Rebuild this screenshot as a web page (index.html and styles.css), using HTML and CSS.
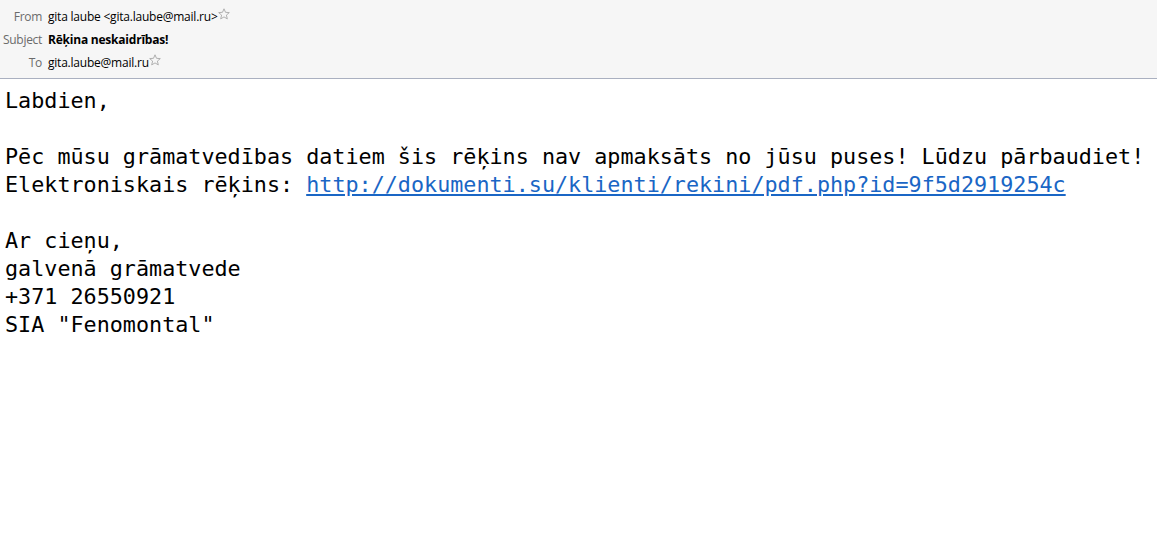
FILE: index.html
```
<!DOCTYPE html>
<html>
<head>
<meta charset="utf-8">
<link rel="stylesheet" href="styles.css">
</head>
<body>
<header class="hdr">
  <div class="row"><span class="lbl">From</span><span class="val">gita laube &lt;gita.laube@mail.ru&gt;</span><svg class="star" viewBox="0 0 12 12"><path d="M6 0.8 L7.5 4.3 L11.3 4.6 L8.4 7.1 L9.3 10.9 L6 8.9 L2.7 10.9 L3.6 7.1 L0.7 4.6 L4.5 4.3 Z"/></svg></div>
  <div class="row"><span class="lbl">Subject</span><span class="val bold">Rēķina neskaidrības!</span></div>
  <div class="row"><span class="lbl">To</span><span class="val">gita.laube@mail.ru</span><svg class="star" viewBox="0 0 12 12"><path d="M6 0.8 L7.5 4.3 L11.3 4.6 L8.4 7.1 L9.3 10.9 L6 8.9 L2.7 10.9 L3.6 7.1 L0.7 4.6 L4.5 4.3 Z"/></svg></div>
</header>
<main class="msg">
<p>Labdien,</p>
<p>&nbsp;</p>
<p>Pēc mūsu grāmatvedības datiem šis rēķins nav apmaksāts no jūsu puses! Lūdzu pārbaudiet!</p>
<p>Elektroniskais rēķins: <a href="#">http://dokumenti.su/klienti/rekini/pdf.php?id=9f5d2919254c</a></p>
<p>&nbsp;</p>
<p>Ar cieņu,</p>
<p>galvenā grāmatvede</p>
<p>+371 26550921</p>
<p>SIA "Fenomontal"</p>
</main>
</body>
</html>
```
FILE: styles.css
```
html, body { margin: 0; padding: 0; background: #fff; }
.hdr {
  background: #f6f6f6;
  border-bottom: 1px solid #aab0c0;
  height: 79px;
  box-sizing: border-box;
  padding-top: 5px;
  font-family: "Open Sans", "Liberation Sans", sans-serif;
  font-size: 12px;
}
.row { display: flex; align-items: center; height: 23px; }
.lbl { width: 42px; text-align: right; color: #6b6b6b; padding-right: 6px; letter-spacing: -0.3px; }
.val { color: #000; letter-spacing: -0.22px; }
.bold { font-weight: 700; }
.star { width: 12px; height: 12px; margin-top: -5px; }
.star path { fill: none; stroke: #a8a8a8; stroke-width: 0.9; stroke-linejoin: round; }
.msg {
  padding: 8px 5px 0;
  font-family: "DejaVu Sans Mono", monospace;
  font-size: 21.75px;
  line-height: 28px;
  color: #000;
}
.msg p { margin: 0; white-space: pre; }
.msg a { color: #1a66c5; text-decoration: underline; }
```
